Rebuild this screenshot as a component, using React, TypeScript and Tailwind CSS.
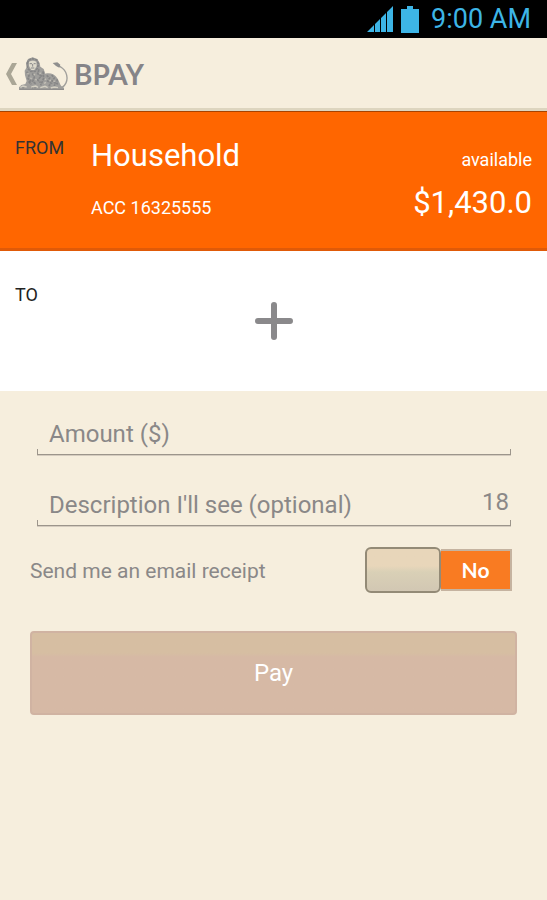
import { useState } from "react";

function StatusBar() {
  return (
    <div className="flex h-[38px] items-center justify-end bg-black pr-4 text-[#3db5e6]">
      <svg width="26" height="26" viewBox="0 0 26 26" fill="currentColor" aria-label="Signal" className="mr-2">
        <path d="M0 26L7 19V26ZM8 18L13 13V26H8ZM14 12L19 7V26H14ZM20 6L26 0V26H20Z" />
      </svg>
      <svg width="18" height="27" viewBox="0 0 18 27" fill="currentColor" aria-label="Battery" className="mr-3">
        <path d="M6 0H12V3H18V27H0V3H6Z" />
      </svg>
      <span className="text-[27px] leading-8">9:00 AM</span>
    </div>
  );
}

function Lion() {
  return (
    <svg width="50" height="34" viewBox="57 57 150 102" aria-hidden="true">
      <path d="M172 152C198 150 207 124 197 103C192 93 184 87 174 83" fill="none" stroke="#a09f9b" strokeWidth="4" />
      <path d="M158 75L172 73L181 80L178 89L168 84Z" fill="#8f8f8e" />
      <path
        d="M78 76L84 63L98 58L112 63L119 75L121 86L131 93L136 107C150 103 164 108 173 122C181 136 181 146 192 149V155H57V148L64 141L76 138L80 129L75 112L74 98L80 88Z"
        fill="#a09f9c"
      />
      <path d="M87 71Q98 65 109 71L110 84L103 96H94L87 84Z" fill="#dedacb" />
      <path d="M89 77H96M101 77H107M98 78V86M93 90H103" fill="none" stroke="#8a8a8a" strokeWidth="3" />
      <path
        d="M82 75L86 66L98 62L110 66L115 77L113 90L105 100H92L83 91ZM80 101L87 112L84 122L94 130M117 94L113 107L124 114L113 126L122 134M97 106L103 118L98 130L108 138M129 100L131 121L122 142M86 130L94 139"
        fill="none"
        stroke="#868686"
        strokeWidth="5"
        strokeDasharray="8 2"
      />
      <path
        d="M140 112L149 120L143 129L154 136L146 144M155 111L163 120L156 129L167 136L162 145M171 124L172 140"
        fill="none"
        stroke="#868686"
        strokeWidth="5"
        strokeDasharray="7 3"
      />
      <path
        d="M82 106L86 108M101 108L105 111M91 120L95 122M106 124L110 127M119 104L122 107M135 122L138 125M149 126L152 129M161 128L164 131M132 136L138 133"
        stroke="#c4c1b7"
        strokeWidth="4"
      />
      <path d="M61 148L69 144L80 147M94 147L107 144L114 148M121 149L135 145L143 149M152 150L163 147L174 149" fill="none" stroke="#d3cfc2" strokeWidth="4" />
      <path d="M58 154H192" fill="none" stroke="#868686" strokeWidth="3" />
      <path d="M69 147V153M98 148V153M105 147V153M150 149V153" fill="none" stroke="#868686" strokeWidth="2" />
    </svg>
  );
}

function Header() {
  return (
    <header className="flex h-[73px] items-center border-b-3 border-[#ddd5bf] bg-[#f6eedd] pt-[2px] pl-[6px]">
      <button type="button" aria-label="Back" className="flex items-center">
        <svg width="13" height="22" viewBox="0 0 13 22" aria-hidden="true">
          <path d="M6 0H11L5 11L11 22H6L0 11Z" fill="#aaa696" />
        </svg>
        <Lion />
      </button>
      <h1 className="ml-[5px] font-[Lato,sans-serif] text-[28px] leading-8 font-bold text-[#858488]">BPAY</h1>
    </header>
  );
}

function FromAccount() {
  return (
    <section className="flex h-[140px] border-t border-b-3 border-t-[#a84300] border-b-[#e05a08] bg-[#ff6600] px-[15px] pt-6 text-white">
      <h2 className="w-[76px] text-lg leading-6 text-[#333333]">FROM</h2>
      <div className="flex-1">
        <p className="text-[31px] leading-10">Household</p>
        <p className="mt-5 text-lg leading-6">ACC 16325555</p>
      </div>
      <div className="pt-3 text-right">
        <p className="text-lg leading-6">available</p>
        <p className="mt-[11px] text-[31px] leading-10">$1,430.0</p>
      </div>
    </section>
  );
}

function ToAccount() {
  return (
    <section className="flex h-[140px] items-center bg-white px-[15px]">
      <h2 className="flex-1 self-start pt-8 text-lg leading-6 text-[#222222]">TO</h2>
      <button type="button" aria-label="Add payee">
        <svg width="38" height="38" viewBox="0 0 38 38" aria-hidden="true">
          <path d="M19 3V35M3 19H35" stroke="#8a898b" strokeWidth="6" strokeLinecap="round" />
        </svg>
      </button>
      <div className="flex-1" />
    </section>
  );
}

function Bracket() {
  return <div className="h-[6px] border-x border-b border-[#9c958b] shadow-[0_1px_0_#d5ccbf]" />;
}

function PaymentForm() {
  const [receipt, setReceipt] = useState(false);
  return (
    <form className="px-[30px] pt-7" onSubmit={(e) => e.preventDefault()}>
      <div className="mr-[6px] ml-[7px]">
        <input
          aria-label="Amount ($)"
          placeholder="Amount ($)"
          className="block h-[30px] w-full px-3 text-2xl outline-none placeholder:text-[#8a8888]"
        />
        <Bracket />
      </div>
      <div className="mt-[35px] mr-[6px] ml-[7px]">
        <div className="flex">
          <input
            aria-label="Description I'll see (optional)"
            placeholder="Description I'll see (optional)"
            maxLength={18}
            className="block h-[30px] min-w-0 flex-1 pl-3 text-2xl outline-none placeholder:text-[#8a8888]"
          />
          <span className="pr-[2px] text-2xl leading-6 text-[#8a8888]">18</span>
        </div>
        <Bracket />
      </div>
      <div className="mt-[21px] mr-[5px] flex items-center justify-between">
        <label htmlFor="receipt" className="pt-[2px] text-[21px] leading-7 text-[#8a8888]">
          Send me an email receipt
        </label>
        <label className="flex items-center">
          <input
            id="receipt"
            type="checkbox"
            className="sr-only"
            checked={receipt}
            onChange={(e) => setReceipt(e.target.checked)}
          />
          <span className="h-[46px] w-[76px] rounded-md border-2 border-[#938a76] bg-linear-to-b from-[#e8d6ba] from-40% via-[#d9d0b6] via-55% to-[#d2c7b3]" />
          <span className="flex h-[42px] w-[71px] items-center justify-center border-2 border-l-0 border-[#c5b3a0] bg-[#f97b22] font-[Lato,sans-serif] text-[21px] leading-6 font-bold text-white">
            {receipt ? "Yes" : "No"}
          </span>
        </label>
      </div>
      <button
        type="submit"
        className="mt-[38px] h-[84px] w-full rounded-sm border-2 border-[#d0b3a2] bg-linear-to-b from-[#d6bea2] from-25% to-[#d6b9a5] to-30% text-2xl text-white"
      >
        Pay
      </button>
    </form>
  );
}

export default function App() {
  return (
    <main className="min-h-screen bg-[#f6eedd] font-[Roboto,sans-serif]">
      <StatusBar />
      <Header />
      <FromAccount />
      <ToAccount />
      <PaymentForm />
    </main>
  );
}
